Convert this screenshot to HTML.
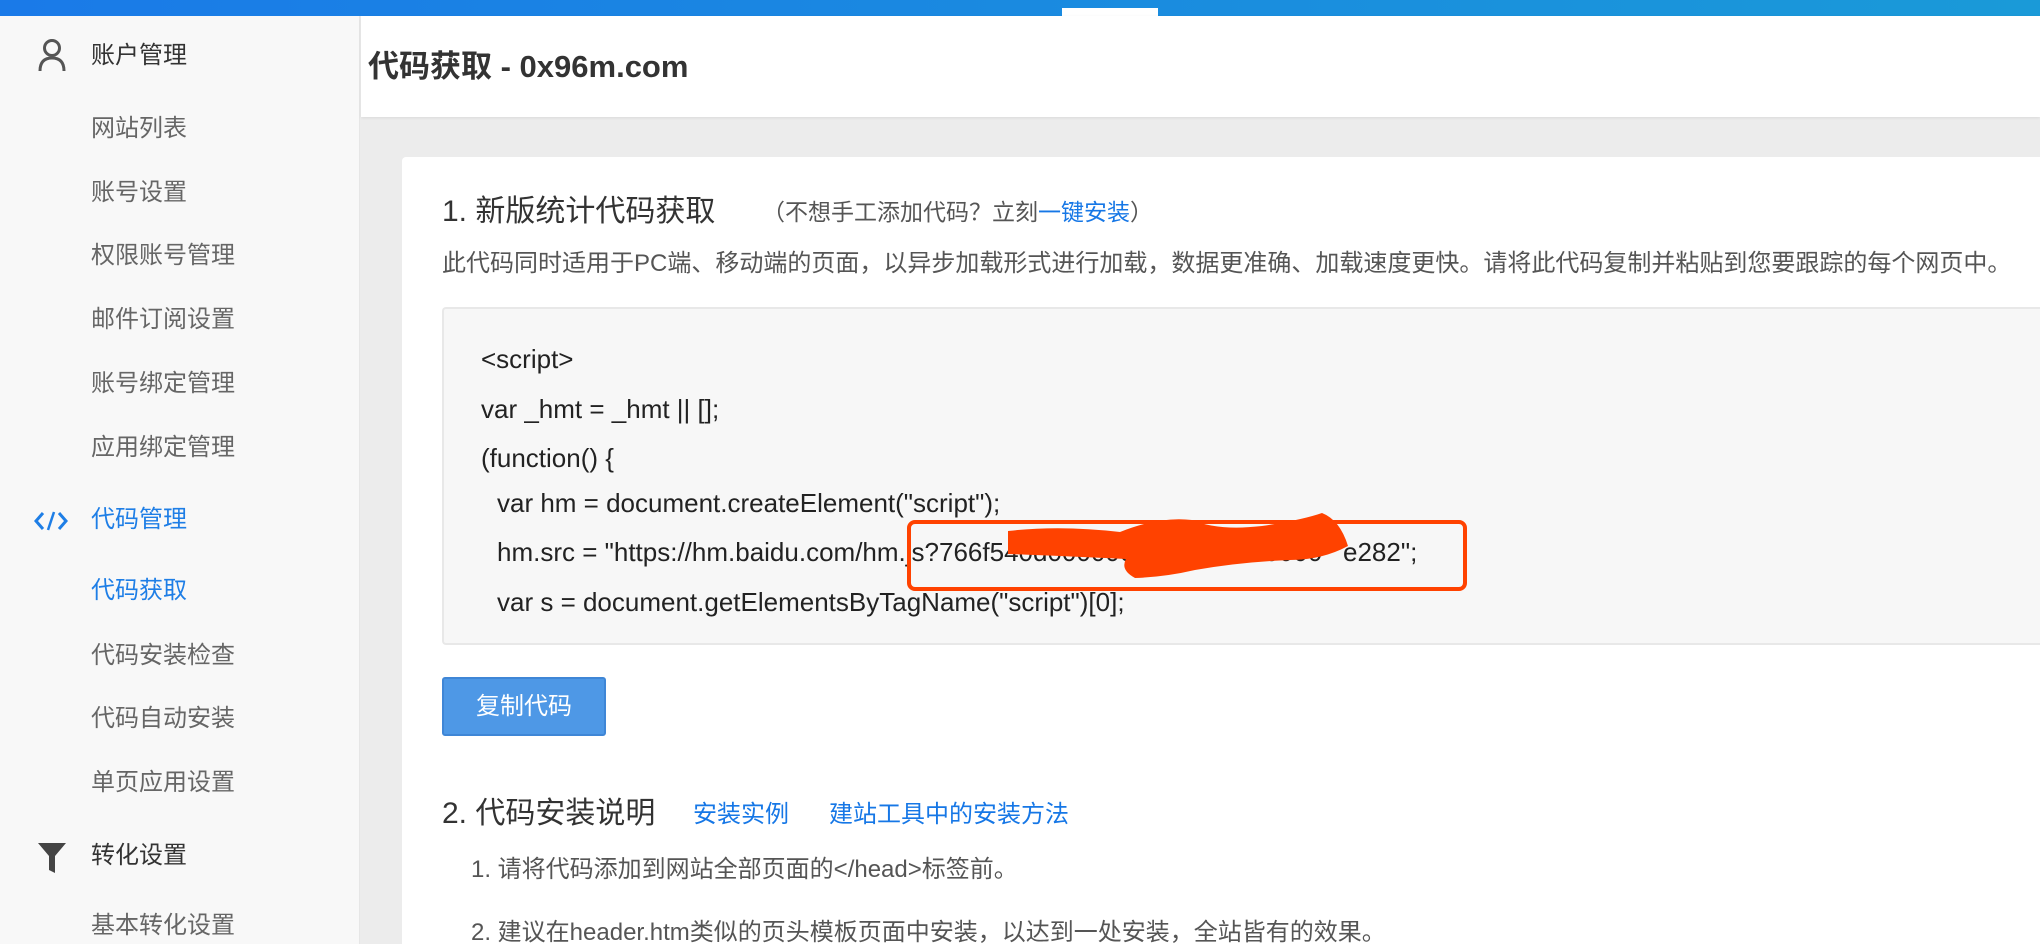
<!DOCTYPE html>
<html><head><meta charset="utf-8"><style>
*{margin:0;padding:0;box-sizing:border-box}
html,body{width:2040px;height:944px;overflow:hidden}
body{background:#ececec;font-family:"Liberation Sans","Noto Sans CJK SC",sans-serif;position:relative}
.top{position:absolute;left:0;top:0;width:2040px;height:16px;background:linear-gradient(90deg,#1a7ae8,#1a9ad8)}
.notch{position:absolute;left:1062px;top:8px;width:96px;height:8px;background:#fff}
.side{position:absolute;left:0;top:16px;width:360px;height:928px;background:#f8f8f8;border-right:1px solid #e6e6e6}
.it{position:absolute;left:91px;font-size:24px;color:#666;line-height:30px;transform:translateY(-15px)}
.g{color:#333}
.a{color:#1e7ee6}
.hdr{position:absolute;left:361px;top:16px;width:1679px;height:101px;background:#fff;box-shadow:0 1px 3px rgba(0,0,0,.08)}
.hdr h1{position:absolute;left:7px;top:33px;font-size:31px;font-weight:bold;color:#333;line-height:36px}
.card{position:absolute;left:402px;top:157px;width:1638px;height:787px;background:#fff;border-radius:4px 0 0 0}
.t{position:absolute;white-space:nowrap;line-height:32px;transform:translateY(-16px)}
.code{position:absolute;left:442px;top:307px;width:1598px;height:338px;background:#f7f7f7;border:2px solid #e8e8e8;border-right:none;border-radius:4px 0 0 4px}
.c{position:absolute;font-size:26px;color:#222;white-space:nowrap;line-height:30px;transform:translateY(-15px)}
.btn{position:absolute;left:442px;top:677px;width:164px;height:59px;background:#4e98e6;border:2px solid #3f86d6;border-radius:3px;color:#fff;font-size:24px;text-align:center;line-height:55px}
.lk{color:#1677e6}
</style></head><body>
<div class="top"></div><div class="notch"></div>
<div class="side">
<svg style="position:absolute;left:38px;top:22px" width="28" height="34" viewBox="0 0 28 34"><circle cx="14" cy="10" r="7.5" fill="none" stroke="#555" stroke-width="3"/><path d="M2 33 Q2 20 14 20 Q26 20 26 33" fill="none" stroke="#555" stroke-width="3"/></svg>
<svg style="position:absolute;left:34px;top:494px" width="34" height="22" viewBox="0 0 34 22"><path d="M9 3 L2 11 L9 19 M25 3 L32 11 L25 19" fill="none" stroke="#1e7ee6" stroke-width="3"/><path d="M20 2 L14 20" stroke="#1e7ee6" stroke-width="2.5"/></svg>
<svg style="position:absolute;left:37px;top:826px" width="30" height="32" viewBox="0 0 30 32"><path d="M1 1 H29 L18 14 V31 L12 28 V14 Z" fill="#444"/></svg>
</div>
<div class="it g" style="top:56px">账户管理</div>
<div class="it" style="top:129px">网站列表</div>
<div class="it" style="top:193px">账号设置</div>
<div class="it" style="top:256px">权限账号管理</div>
<div class="it" style="top:320px">邮件订阅设置</div>
<div class="it" style="top:384px">账号绑定管理</div>
<div class="it" style="top:448px">应用绑定管理</div>
<div class="it a" style="top:520px">代码管理</div>
<div class="it a" style="top:591px">代码获取</div>
<div class="it" style="top:656px">代码安装检查</div>
<div class="it" style="top:719px">代码自动安装</div>
<div class="it" style="top:783px">单页应用设置</div>
<div class="it g" style="top:856px">转化设置</div>
<div class="it" style="top:926px">基本转化设置</div>
<div class="hdr"><h1>代码获取 - 0x96m.com</h1></div>
<div class="card"></div>
<div class="t" style="left:442px;top:212px;font-size:30px;color:#333">1. 新版统计代码获取</div>
<div class="t" style="left:762px;top:212px;font-size:23px;color:#555">（不想手工添加代码？立刻<span class="lk">一键安装</span>）</div>
<div class="t" style="left:442px;top:264px;font-size:24px;color:#555">此代码同时适用于PC端、移动端的页面，以异步加载形式进行加载，数据更准确、加载速度更快。请将此代码复制并粘贴到您要跟踪的每个网页中。</div>
<div class="code"></div>
<div class="c" style="left:481px;top:359px">&lt;script&gt;</div>
<div class="c" style="left:481px;top:409px">var _hmt = _hmt || [];</div>
<div class="c" style="left:481px;top:458px">(function() {</div>
<div class="c" style="left:497px;top:503px">var hm = document.createElement("script");</div>
<div class="c" style="left:497px;top:552px">hm.src = "https://hm.baidu.com/hm.js?766f540d0000000000000000000</div>
<div class="c" style="left:1343px;top:552px;background:#f7f7f7;padding-right:40px">e282";</div>
<div class="c" style="left:497px;top:602px">var s = document.getElementsByTagName("script")[0];</div>
<svg style="position:absolute;left:0;top:0" width="2040" height="944"><path d="M1008 531 Q1060 525 1120 532 Q1160 516 1192 520 Q1218 531 1262 526 Q1302 520 1322 513 Q1340 520 1348 546 Q1322 560 1290 560 Q1240 562 1195 570 Q1165 577 1135 578 Q1120 570 1126 559 Q1060 556 1008 554 Z" fill="#ff4200"/><rect x="909" y="522" width="556" height="67" rx="6" fill="none" stroke="#ff4200" stroke-width="4"/></svg>
<div class="btn">复制代码</div>
<div class="t" style="left:442px;top:814px;font-size:30px;color:#333">2. 代码安装说明</div>
<div class="t lk" style="left:693px;top:815px;font-size:24px">安装实例</div>
<div class="t lk" style="left:829px;top:815px;font-size:24px">建站工具中的安装方法</div>
<div class="t" style="left:471px;top:870px;font-size:24px;color:#555">1. 请将代码添加到网站全部页面的&lt;/head&gt;标签前。</div>
<div class="t" style="left:471px;top:933px;font-size:24px;color:#555">2. 建议在header.htm类似的页头模板页面中安装，以达到一处安装，全站皆有的效果。</div>
</body></html>
